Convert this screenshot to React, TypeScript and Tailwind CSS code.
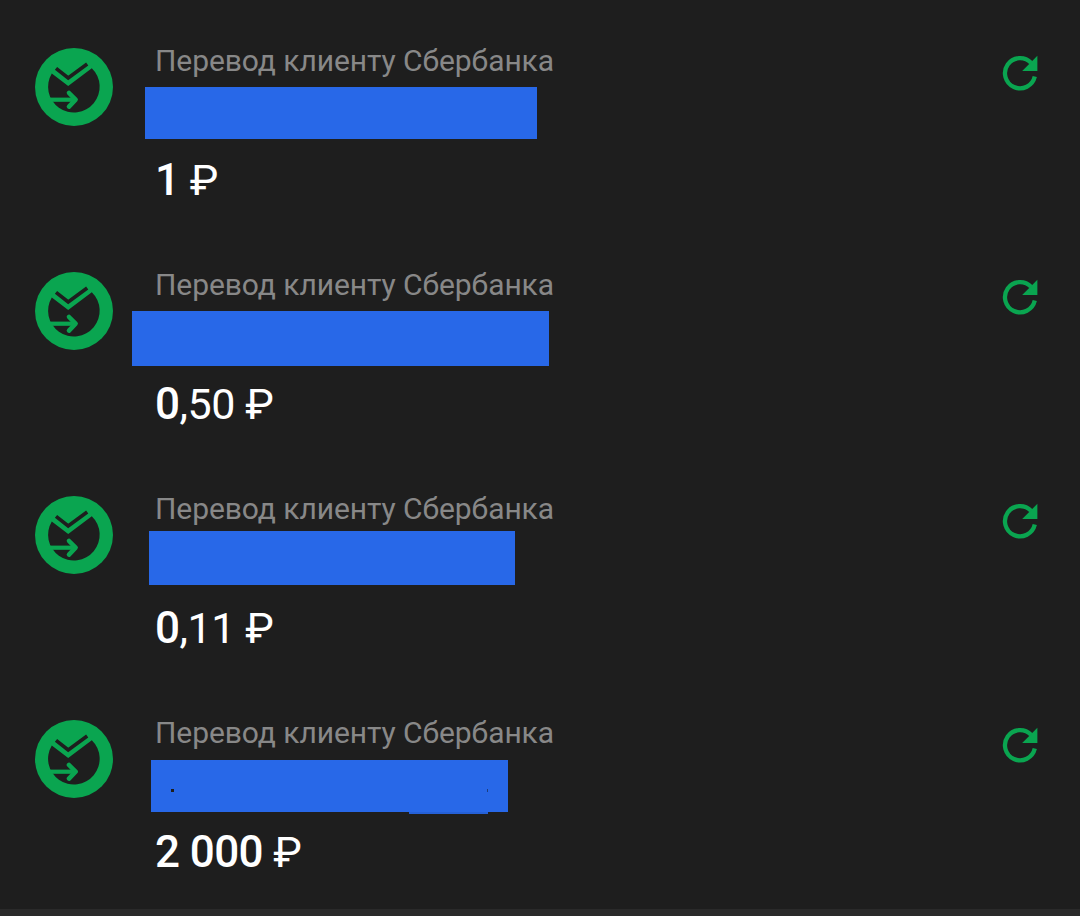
import React from "react";

type Transfer = {
  id: number;
  whole: string;
  fraction?: string;
  mask: string;
  patched?: boolean;
};

const transfers: Transfer[] = [
  { id: 1, whole: "1", mask: "ml-[145px] mt-[87px] w-[392px] h-[52px]" },
  { id: 2, whole: "0", fraction: "50", mask: "ml-[132px] mt-[87px] w-[417px] h-[55px]" },
  { id: 3, whole: "0", fraction: "11", mask: "ml-[149px] mt-[83px] w-[366px] h-[54px]" },
  { id: 4, whole: "2 000", mask: "ml-[151px] mt-[88px] w-[357px] h-[52px]", patched: true },
];

function TransferIcon() {
  return (
    <svg className="w-[78px] h-[78px]" viewBox="0 0 78 78" fill="none">
      <circle cx="39" cy="39" r="39" fill="#0aa550" />
      <path d="M16.8 25.4L33.2 38L56.8 20.2A25.8 25.8 0 1 1 16.8 25.4Z" fill="#1e1e1e" />
      <path d="M21 20.4L33.2 29.9L52.2 16" stroke="#1e1e1e" strokeWidth="3.7" />
      <path d="M13 51.7H40" stroke="#0aa550" strokeWidth="4.2" />
      <path d="M34 45L40.6 51.7L34 58.6" stroke="#0aa550" strokeWidth="4.6" strokeLinecap="round" strokeLinejoin="round" />
    </svg>
  );
}

function RepeatIcon() {
  return (
    <svg className="w-10 h-10" viewBox="0 0 40 40" fill="none">
      <path d="M31 9.8A15.1 15.1 0 1 0 34.8 23.6" stroke="#0aa550" strokeWidth="4.3" />
      <path d="M37.4 2.8V18H22.2Z" fill="#0aa550" />
    </svg>
  );
}

function TransferRow({ item }: { item: Transfer }) {
  return (
    <div className="relative flex h-56 items-start">
      <div className="ml-[35px] mt-12 shrink-0">
        <TransferIcon />
      </div>
      <div className="ml-[42px] flex-1">
        <p className="mt-[43px] text-[30px] leading-9 tracking-[-0.07px] text-[#888888]">Перевод клиенту Сбербанка</p>
        <p className="mt-[75px] flex items-baseline text-[43px] leading-[52px] tracking-[-0.4px] text-white whitespace-pre">
          <span className="text-[44px] font-medium tracking-[-0.6px]">{item.whole}</span>
          {item.fraction && <span>,{item.fraction}</span>}
          <span> ₽</span>
        </p>
      </div>
      <button className="mr-10 mt-[53px] shrink-0" aria-label="Повторить">
        <RepeatIcon />
      </button>

      {/* recipient name is hidden */}
      <div className={`absolute left-0 top-0 bg-[#2868e8] ${item.mask}`}>
        {item.patched && (
          <>
            <span className="absolute left-[20px] top-[29px] h-[3px] w-[3px] bg-[#1e1e1e]" />
            <span className="absolute left-[258px] top-[52px] h-[2px] w-[79px] bg-[#2560d6]" />
            <span className="absolute left-[336px] top-[29px] h-[3px] w-px bg-[#1b3d80]" />
          </>
        )}
      </div>
    </div>
  );
}

export default function App() {
  return (
    <div className="h-[916px] w-[1080px] overflow-hidden bg-[#1e1e1e] font-['Roboto',sans-serif]">
      {transfers.map((item) => (
        <TransferRow key={item.id} item={item} />
      ))}
      <div className="mt-[13px] h-[7px] bg-[#2a2a2a]" />
    </div>
  );
}
